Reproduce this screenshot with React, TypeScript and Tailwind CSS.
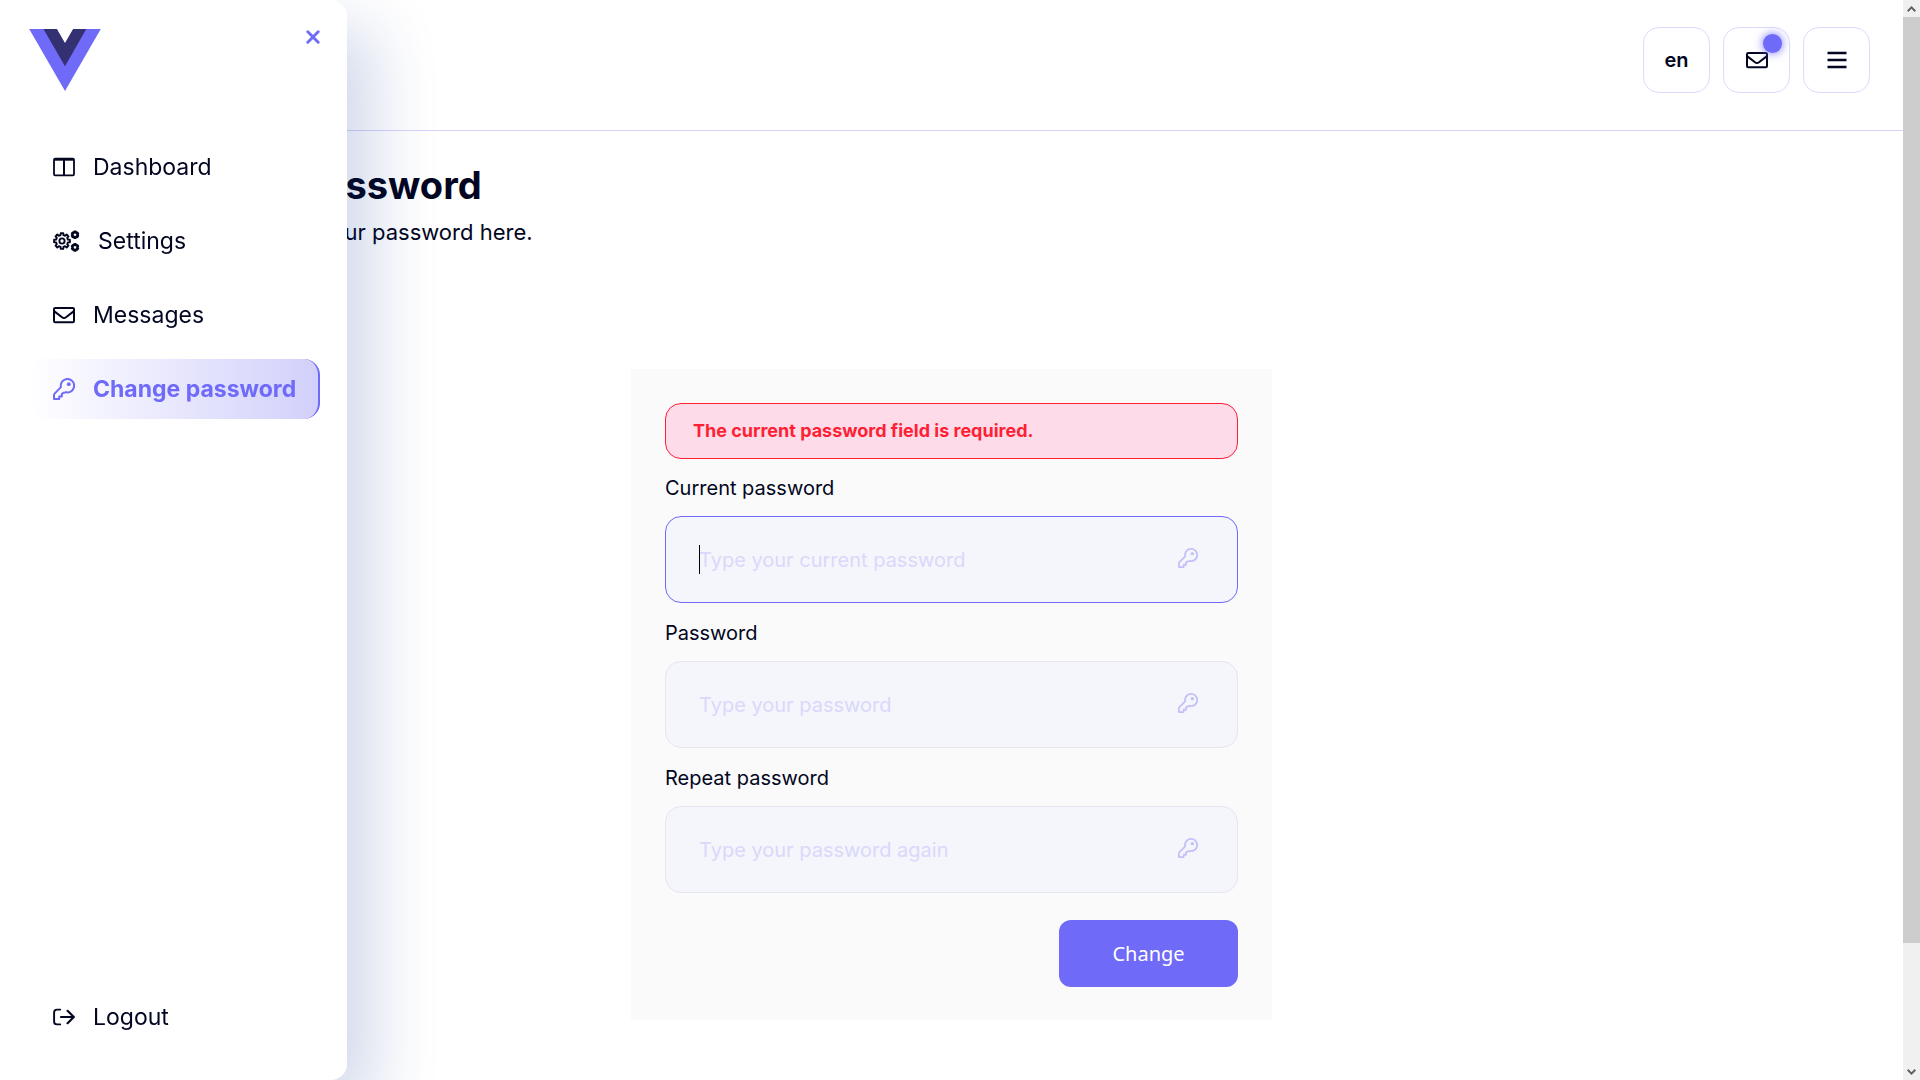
import React from "react";

type IconProps = { className?: string };

function Logo() {
  return (
    <svg viewBox="0 0 262 227" className="h-[62px] w-[72px]" aria-hidden="true">
      <path fill="#6f6af8" d="M161 0l-30 52L101 0H0l131 227L262 0z" />
      <path fill="#343172" d="M161 0l-30 52L101 0H52l79 136L209 0z" />
    </svg>
  );
}

function ColumnsIcon() {
  return (
    <svg viewBox="0 0 22 20" className="h-5 w-[22px]" fill="none" stroke="currentColor" strokeWidth="1.8" aria-hidden="true">
      <rect x="1" y="1.6" width="20" height="16.8" rx="1.2" />
      <path d="M1 2.4h20" strokeWidth="2.6" />
      <path d="M11 2v16" strokeWidth="2" />
    </svg>
  );
}

function Gear({ cx, cy, r, teeth, hole, width }: { cx: number; cy: number; r: number; teeth: number; hole: number; width: number }) {
  const points: string[] = [];
  for (let i = 0; i < teeth; i++) {
    const step = (Math.PI * 2) / teeth;
    const mid = i * step - Math.PI / 2;
    const outer = r;
    const inner = r * 0.76;
    const corners: [number, number][] = [
      [-0.3, inner],
      [-0.2, outer],
      [0.2, outer],
      [0.3, inner],
    ];
    for (const [offset, radius] of corners) {
      const angle = mid + offset * step;
      points.push(`${cx + Math.cos(angle) * radius},${cy + Math.sin(angle) * radius}`);
    }
  }
  return (
    <g strokeWidth={width}>
      <polygon points={points.join(" ")} />
      {hole > 0 && <circle cx={cx} cy={cy} r={hole} />}
    </g>
  );
}

function GearsIcon() {
  return (
    <svg viewBox="0 0 27 22" className="h-[22px] w-[27px]" fill="none" stroke="currentColor" strokeLinejoin="round" aria-hidden="true">
      <Gear cx={9} cy={11} r={8} teeth={8} hole={2.6} width={1.9} />
      <Gear cx={22} cy={4.8} r={3.2} teeth={6} hole={0} width={2.3} />
      <Gear cx={22} cy={17.4} r={3.2} teeth={6} hole={0} width={2.3} />
    </svg>
  );
}

function EnvelopeIcon() {
  return (
    <svg viewBox="0 0 22 18" className="h-[18px] w-[22px]" fill="none" stroke="currentColor" strokeWidth="2" strokeLinejoin="round" aria-hidden="true">
      <rect x="1" y="1.9" width="20" height="14.4" rx="1.2" />
      <path d="M1.4 5.4l7.6 5.9c1.2.9 2.8.9 4 0l7.6-5.9" />
    </svg>
  );
}

function KeyIcon({ className }: IconProps) {
  return (
    <svg viewBox="1 1 22 22" className={className} fill="none" stroke="currentColor" strokeWidth="2" strokeLinejoin="round" aria-hidden="true">
      <path d="M2.6 16.6A2 2 0 0 0 2 18v4h5.2v-2.6h2.6V17l1.6-1.2h.6a2 2 0 0 0 1.4-.5h.9a6.7 6.7 0 1 0-5.4-5.2z" />
      <circle cx="16.8" cy="7.2" r="1.9" fill="currentColor" stroke="none" />
    </svg>
  );
}

function LogoutIcon() {
  return (
    <svg viewBox="0 0 22 18" className="h-[18px] w-[22px]" fill="none" stroke="currentColor" strokeWidth="1.9" strokeLinecap="round" strokeLinejoin="round" aria-hidden="true">
      <path d="M7.2 1.6H4A2.9 2.9 0 0 0 1.1 4.5v9A2.9 2.9 0 0 0 4 16.4h3.2" />
      <path d="M8 9h12.6M14.6 2.8L20.8 9l-6.2 6.2" strokeWidth="2.2" />
    </svg>
  );
}

function CloseIcon() {
  return (
    <svg viewBox="0 0 14 14" className="size-3.5" stroke="currentColor" strokeWidth="2.9" strokeLinecap="round" aria-hidden="true">
      <path d="M1.8 1.8l10.4 10.4M12.2 1.8L1.8 12.2" />
    </svg>
  );
}

function BarsIcon() {
  return (
    <svg viewBox="0 0 20 18" className="h-[18px] w-5" stroke="currentColor" strokeWidth="2.5" aria-hidden="true">
      <path d="M.5 2h19M.5 9h19M.5 16h19" />
    </svg>
  );
}

function NavItem({ icon, label, active = false }: { icon: React.ReactNode; label: string; active?: boolean }) {
  return (
    <a
      href="#"
      aria-current={active ? "page" : undefined}
      className={
        active
          ? "flex h-[60px] items-center gap-[18px] rounded-2xl border-r-2 border-[#6f6af8] bg-linear-to-r from-white to-[#d2d0fb] pl-6 text-[23px] font-bold whitespace-nowrap text-[#6f6af8]"
          : "flex h-[60px] items-center gap-[18px] pl-6 text-[23px] whitespace-nowrap"
      }
    >
      {icon}
      <span>{label}</span>
    </a>
  );
}

function Sidebar() {
  return (
    <aside className="fixed inset-y-0 left-0 z-10 flex w-[347px] flex-col rounded-r-2xl bg-white pr-[27px] pb-[33px] pl-[29px] shadow-[28px_28px_64px_rgba(0,50,145,0.18)]">
      <div className="flex items-start justify-between pt-[29px]">
        <a href="#" aria-label="Home">
          <Logo />
        </a>
        <button type="button" aria-label="Close menu" className="pt-px text-[#6f6af8]">
          <CloseIcon />
        </button>
      </div>
      <nav className="mt-[46px] flex flex-1 flex-col gap-3.5">
        <NavItem icon={<ColumnsIcon />} label="Dashboard" />
        <NavItem icon={<GearsIcon />} label="Settings" />
        <NavItem icon={<EnvelopeIcon />} label="Messages" />
        <NavItem icon={<KeyIcon className="size-[22px]" />} label="Change password" active />
        <div className="mt-auto">
          <NavItem icon={<LogoutIcon />} label="Logout" />
        </div>
      </nav>
    </aside>
  );
}

function TopBar() {
  const box = "relative flex h-[66px] w-[67px] items-center justify-center rounded-2xl border border-[#dddbfc]";
  return (
    <header className="flex justify-end gap-[13px] border-b border-[#d6d4fb] px-[33px] pt-[27px] pb-[37px]">
      <button type="button" className={`${box} text-xl font-semibold`}>
        en
      </button>
      <button type="button" aria-label="Messages" className={box}>
        <EnvelopeIcon />
        <span className="absolute top-1.5 right-[7px] size-[19px] rounded-full bg-[#6f6af8] shadow-[0_0_10px_#6f6af8]" />
      </button>
      <button type="button" aria-label="Menu" className={box}>
        <BarsIcon />
      </button>
    </header>
  );
}

function PasswordField({ id, label, placeholder, focused = false }: { id: string; label: string; placeholder: string; focused?: boolean }) {
  return (
    <div>
      <label htmlFor={id} className="flex h-[57px] items-center text-[20px]">
        {label}
      </label>
      <div className="relative">
        <input
          id={id}
          type="password"
          placeholder={placeholder}
          className={
            focused
              ? "block h-[87px] w-full rounded-2xl border border-[#6f6af8] bg-[#f4f6fb] pr-20 pl-[33px] text-[20px] outline-none placeholder:text-[#dad8fb]"
              : "block h-[87px] w-full rounded-2xl border border-[#e6e6ef] bg-[#f4f6fb] pr-20 pl-[33px] text-[20px] outline-none placeholder:text-[#dad8fb]"
          }
        />
        {focused && <span className="absolute top-[29px] left-[34px] h-[29px] w-px bg-black" />}
        <KeyIcon className="absolute top-8 right-10 size-5 text-[#c3c1f9]" />
      </div>
    </div>
  );
}

function PasswordForm() {
  return (
    <form className="mx-auto mt-[120px] w-full max-w-[641px] bg-[#fafafa] px-[34px] pt-[34px] pb-[33px]">
      <p role="alert" className="flex h-14 items-center rounded-2xl border border-[#ff1f35] bg-[#fddbe8] px-[27px] text-lg font-bold text-[#ff1f35]">
        The current password field is required.
      </p>
      <div className="flex flex-col gap-px">
        <PasswordField id="current" label="Current password" placeholder="Type your current password" focused />
        <PasswordField id="password" label="Password" placeholder="Type your password" />
        <PasswordField id="repeat" label="Repeat password" placeholder="Type your password again" />
      </div>
      <div className="mt-[27px] flex justify-end">
        <button type="submit" className="h-[67px] w-[179px] rounded-xl bg-[#6f6af8] font-['Noto_Sans',sans-serif] text-[20px] text-white">
          Change
        </button>
      </div>
    </form>
  );
}

function Scrollbar() {
  return (
    <div aria-hidden="true" className="flex w-[17px] shrink-0 flex-col items-center bg-[#f0f0f0] text-[#606060]">
      <div className="flex h-[17px] items-center">
        <svg viewBox="0 0 9 6" className="h-1.5 w-[9px]" fill="none" stroke="currentColor" strokeWidth="2">
          <path d="M.7 5.2L4.5 1.4l3.8 3.8" />
        </svg>
      </div>
      <div className="w-full grow-[926] bg-[#cdcdcd]" />
      <div className="grow-[120]" />
      <div className="flex h-[17px] items-center">
        <svg viewBox="0 0 9 6" className="h-1.5 w-[9px]" fill="none" stroke="currentColor" strokeWidth="2">
          <path d="M.7.8l3.8 3.8L8.3.8" />
        </svg>
      </div>
    </div>
  );
}

export default function App() {
  return (
    <div className="flex min-h-screen bg-white font-['Inter',sans-serif] text-[#020621]">
      <Sidebar />
      <div className="min-w-0 flex-1">
        <TopBar />
        <main className="pt-[30px]">
          <div className="pl-[146px]">
            <h1 className="text-[38px] leading-[48px] font-bold">Change password</h1>
            <p className="mt-1.5 text-[22px] leading-[34px]">You can change your password here.</p>
          </div>
          <PasswordForm />
        </main>
      </div>
      <Scrollbar />
    </div>
  );
}
